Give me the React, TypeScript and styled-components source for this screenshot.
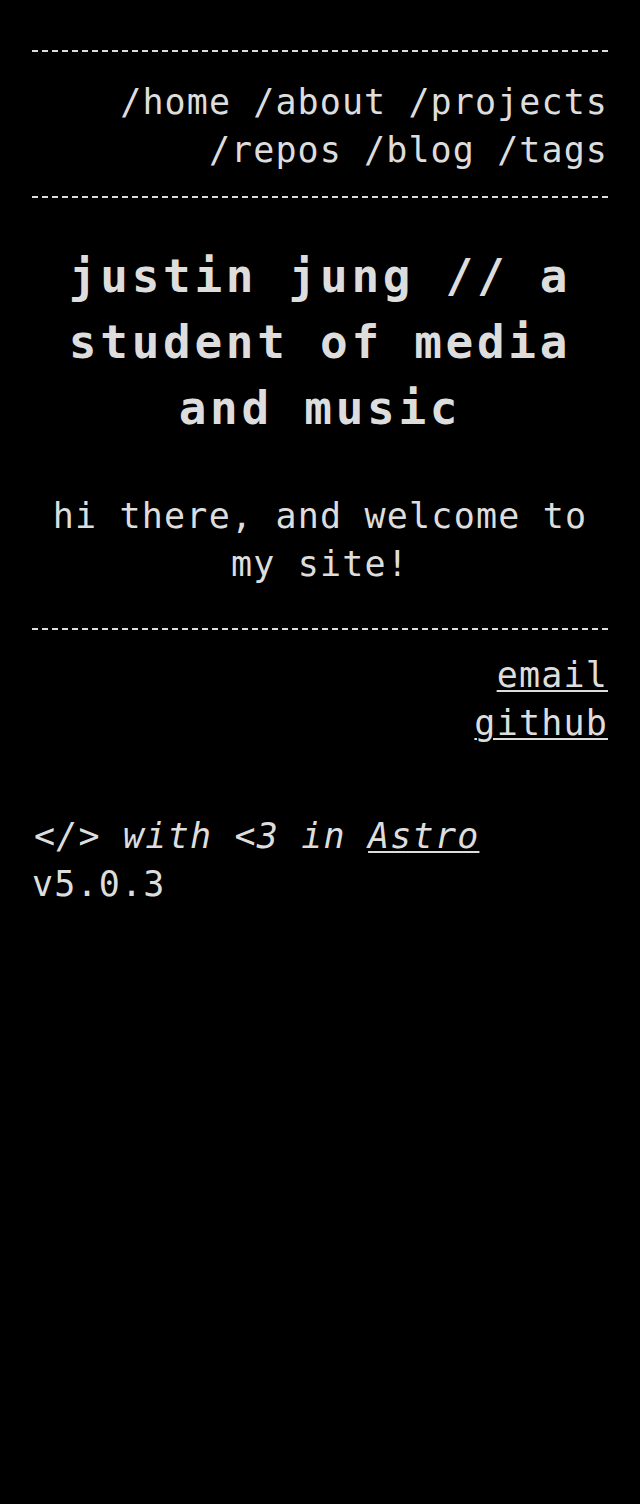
import React from "react";
import styled, { createGlobalStyle } from "styled-components";

const Global = createGlobalStyle`
  html, body {
    margin: 0;
    padding: 0;
    background: #000;
  }
  body {
    color: #dddddd;
    font-family: "DejaVu Sans Mono", "Liberation Mono", monospace;
  }
`;

const Page = styled.div`
  min-height: 1504px;
  box-sizing: border-box;
  padding: 50px 32px 0;
  background: #000;
  color: #dddddd;
  font-family: "DejaVu Sans Mono", "Liberation Mono", monospace;
  font-size: 35px;
  letter-spacing: 1.2px;
  line-height: 48px;
`;

const Rule = styled.hr`
  margin: 0;
  border: 0;
  height: 2px;
  background: repeating-linear-gradient(
    to right,
    #dddddd 0 6px,
    transparent 6px 10px
  );
`;

const Nav = styled.nav`
  padding: 26px 0 22px;
  text-align: right;
  letter-spacing: 1.1px;
`;

const NavLink = styled.a`
  color: #dddddd;
  text-decoration: none;
`;

const Main = styled.main`
  padding: 45px 0 40px;
  text-align: center;
`;

const Title = styled.h1`
  margin: 0;
  font-size: 46px;
  font-weight: 700;
  letter-spacing: 3.7px;
  line-height: 66px;
`;

const Intro = styled.p`
  margin: 51px 0 0;
`;

const Footer = styled.footer`
  padding-top: 21px;
`;

const Links = styled.div`
  display: flex;
  flex-direction: column;
  align-items: flex-end;
`;

const Underlined = styled.a`
  color: #dddddd;
  text-decoration: underline;
  text-decoration-thickness: 2px;
  text-underline-offset: 3px;
`;

const Credit = styled.div`
  margin-top: 65px;
`;

const Italic = styled.div`
  font-style: italic;
  padding-left: 2px;
`;

const navItems = ["/home", "/about", "/projects", "/repos", "/blog", "/tags"];

export default function App() {
  return (
    <>
      <Global />
      <Page>
        <Rule />
        <Nav>
          {navItems.map((n, i) => (
            <React.Fragment key={n}>
              <NavLink href="#">{n}</NavLink>
              {i < navItems.length - 1 ? " " : null}
            </React.Fragment>
          ))}
        </Nav>
        <Rule />
        <Main>
          <Title>justin jung // a student of media and music</Title>
          <Intro>hi there, and welcome to my site!</Intro>
        </Main>
        <Rule />
        <Footer>
          <Links>
            <Underlined href="#">email</Underlined>
            <Underlined href="#">github</Underlined>
          </Links>
          <Credit>
            <Italic>
              &lt;/&gt; with &lt;3 in <Underlined href="#">Astro</Underlined>
            </Italic>
            <div>v5.0.3</div>
          </Credit>
        </Footer>
      </Page>
    </>
  );
}
